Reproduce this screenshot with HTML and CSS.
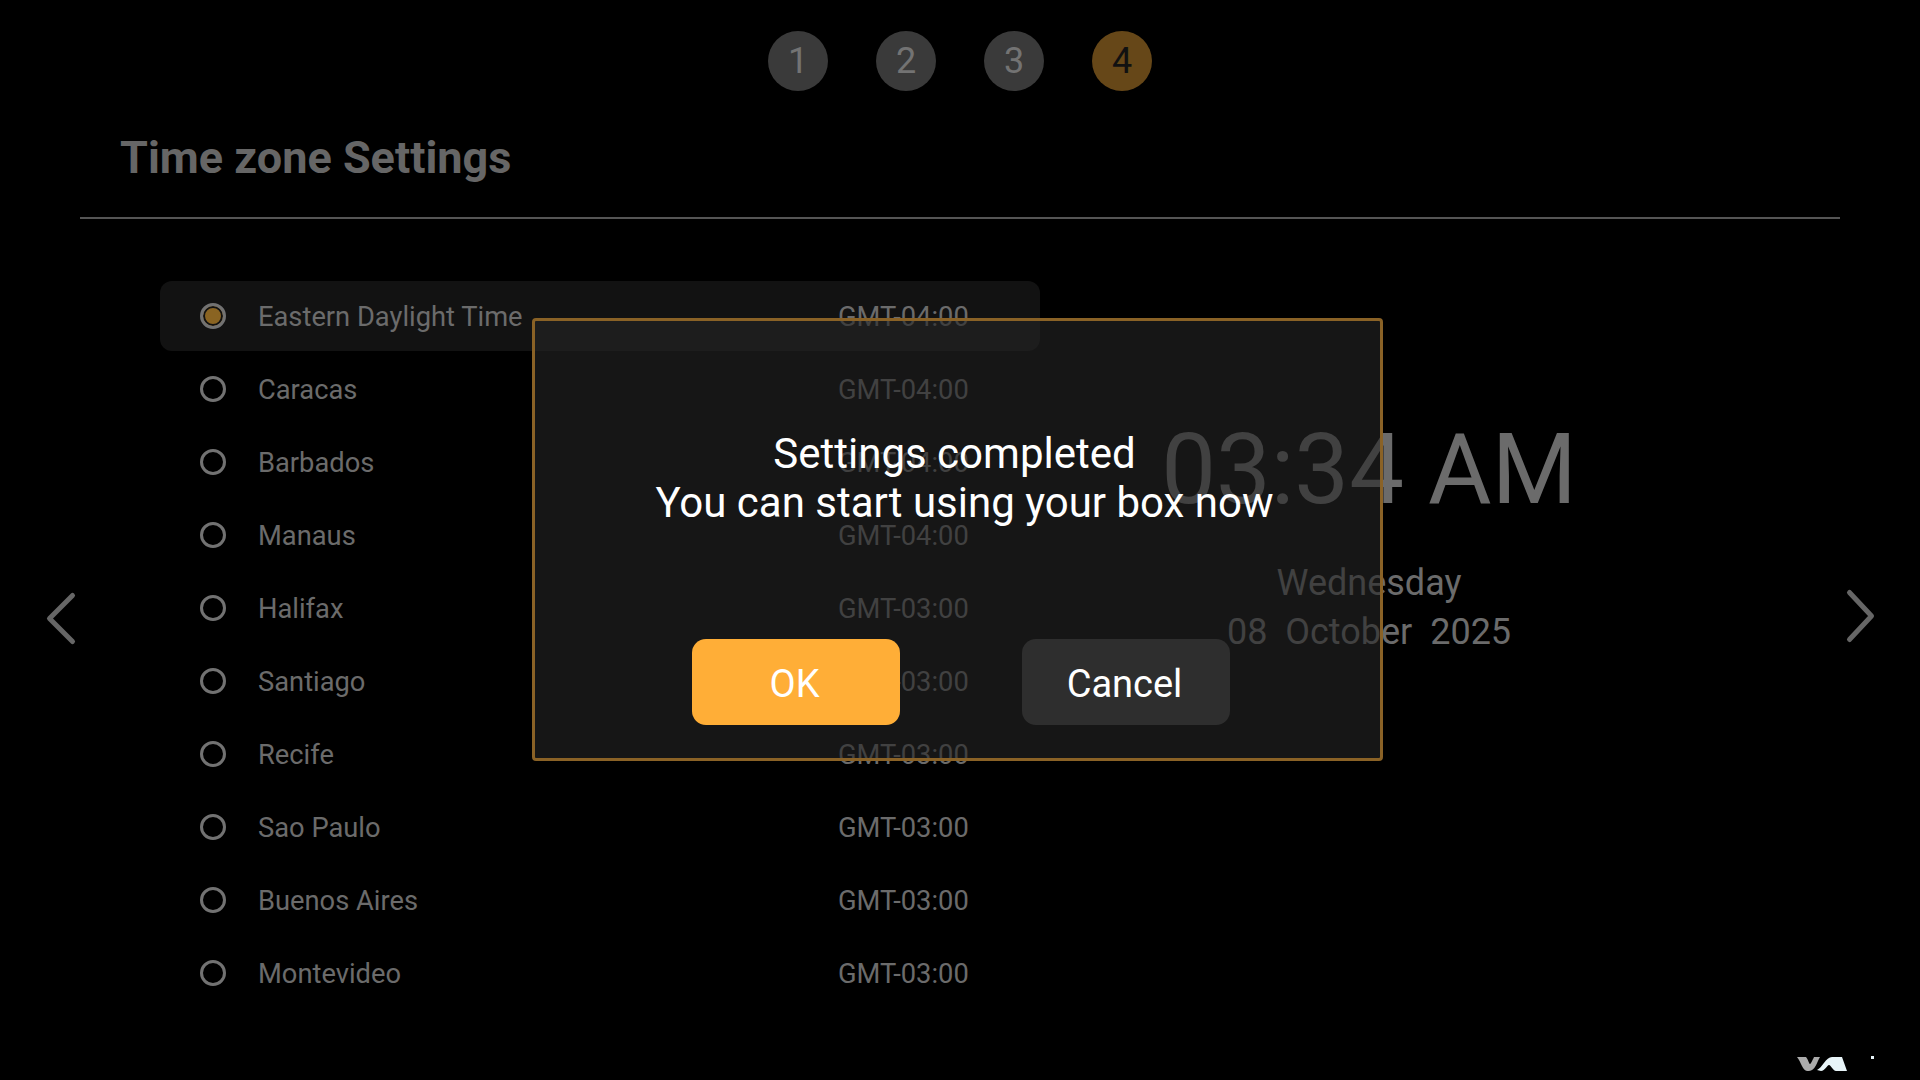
FILE: index.html
```html
<!DOCTYPE html>
<html lang="en">
<head>
  <meta charset="UTF-8">
  <title>Time zone Settings</title>
  <link rel="stylesheet" href="styles.css">
</head>
<body>
  <div class="steps">
    <div class="step">1</div>
    <div class="step">2</div>
    <div class="step">3</div>
    <div class="step current">4</div>
  </div>
  <div class="title">Time zone Settings</div>
  <div class="rule"></div>
  <div class="content">
    <div class="zone-list">
      <div class="zone selected"><span class="radio"></span><span class="zone-name">Eastern Daylight Time</span><span class="zone-gmt">GMT-04:00</span></div>
      <div class="zone"><span class="radio"></span><span class="zone-name">Caracas</span><span class="zone-gmt">GMT-04:00</span></div>
      <div class="zone"><span class="radio"></span><span class="zone-name">Barbados</span><span class="zone-gmt">GMT-04:00</span></div>
      <div class="zone"><span class="radio"></span><span class="zone-name">Manaus</span><span class="zone-gmt">GMT-04:00</span></div>
      <div class="zone"><span class="radio"></span><span class="zone-name">Halifax</span><span class="zone-gmt">GMT-03:00</span></div>
      <div class="zone"><span class="radio"></span><span class="zone-name">Santiago</span><span class="zone-gmt">GMT-03:00</span></div>
      <div class="zone"><span class="radio"></span><span class="zone-name">Recife</span><span class="zone-gmt">GMT-03:00</span></div>
      <div class="zone"><span class="radio"></span><span class="zone-name">Sao Paulo</span><span class="zone-gmt">GMT-03:00</span></div>
      <div class="zone"><span class="radio"></span><span class="zone-name">Buenos Aires</span><span class="zone-gmt">GMT-03:00</span></div>
      <div class="zone"><span class="radio"></span><span class="zone-name">Montevideo</span><span class="zone-gmt">GMT-03:00</span></div>
    </div>
    <div class="clock">
      <div class="clock-time">03:34 AM</div>
      <div class="clock-day">Wednesday</div>
      <div class="clock-date">08&nbsp; October&nbsp; 2025</div>
    </div>
  </div>

  <svg class="arrow arrow-left" width="40" height="64" viewBox="0 0 40 64">
    <path d="M32.5 9.5 L9.5 32.5 L32.5 55.5" fill="none" stroke="#666" stroke-width="5" stroke-linecap="round" stroke-linejoin="round"/>
  </svg>
  <svg class="arrow arrow-right" width="40" height="64" viewBox="0 0 40 64">
    <path d="M9.5 6.5 L31.5 30 L9.5 53.5" fill="none" stroke="#666" stroke-width="5" stroke-linecap="round" stroke-linejoin="round"/>
  </svg>

  <div class="dialog">
    <div class="dialog-text">
      <div class="dialog-head">Settings completed</div>
      <div>You can start using your box now</div>
    </div>
    <div class="dialog-buttons">
      <div class="btn btn-ok">OK</div>
      <div class="btn btn-cancel">Cancel</div>
    </div>
  </div>

  <svg class="logo" width="80" height="20" viewBox="0 0 80 20">
    <path d="M0 1 H9 C11 3 12 8 13 8 C14 8 16 3 17 1 H23 C20 6 18 15 12 15 H10 C6 15 4 6 0 1 Z" fill="#ababab"/>
    <path d="M20 14 C25 12 29 1 35 1 H45 L50 15 H39 C36 15 34 9 32 9 C30 9 28 15 24 15 Z" fill="#e8f4f8"/>
    <rect x="74" y="0" width="3" height="3" fill="#e8f4f8"/>
  </svg>
</body>
</html>
```

FILE: styles.css
```css
body {
  margin: 0;
  width: 1920px;
  height: 1080px;
  overflow: hidden;
  position: relative;
  background-color: #000;
  font-family: Roboto, sans-serif;
  color: #6b6b6b;
}
.steps {
  display: flex;
  justify-content: center;
  gap: 48px;
  padding-top: 31px;
}
.step {
  width: 60px;
  height: 60px;
  border-radius: 50%;
  background-color: #3a3a3a;
  color: #737373;
  font-size: 36px;
  line-height: 61px;
  text-align: center;
}
.step.current {
  background-color: #664718;
  color: #111;
}
.title {
  margin: 41px 0 0 120px;
  font-size: 45px;
  line-height: 52px;
  font-weight: 700;
  color: #666;
}
.rule {
  height: 2px;
  margin: 33px 80px 0;
  background-color: #555;
}
.content {
  display: flex;
  margin-top: 62px;
}
.zone-list {
  display: flex;
  flex-direction: column;
  gap: 3px;
  width: 880px;
  margin-left: 160px;
}
.zone {
  display: flex;
  align-items: center;
  height: 70px;
  padding-left: 40px;
  border-radius: 12px;
  font-size: 27.3px;
  line-height: 34px;
}
.zone.selected {
  background-color: #121212;
}
.radio {
  box-sizing: border-box;
  width: 26px;
  height: 26px;
  border: 3px solid #727272;
  border-radius: 50%;
  margin-right: 32px;
  margin-top: -1px;
}
.zone.selected .radio {
  background-color: #8a6422;
  box-shadow: inset 0 0 0 2px #121212;
}
.zone-name {
  width: 580px;
  padding-top: 2px;
}
.zone-gmt {
  padding-top: 2px;
}
.clock {
  width: 658px;
  padding-top: 133px;
  text-align: center;
}
.clock-time {
  font-size: 97.5px;
  line-height: 112px;
  white-space: nowrap;
}
.clock-day {
  margin-top: 33px;
  font-size: 36px;
  line-height: 49px;
}
.clock-date {
  font-size: 36px;
  line-height: 49px;
}
.arrow {
  position: absolute;
  top: 586px;
}
.arrow-left {
  left: 40px;
}
.arrow-right {
  left: 1840px;
}
.dialog {
  position: absolute;
  left: 532px;
  top: 318px;
  box-sizing: border-box;
  width: 851px;
  height: 443px;
  border: 3px solid #8a6226;
  border-radius: 4px;
  background-color: rgba(37, 37, 37, 0.6);
}
.dialog-text {
  padding: 108px 0 0 14px;
  font-size: 42px;
  line-height: 49px;
  color: #fff;
  text-align: center;
}
.dialog-head {
  padding-right: 20px;
}
.dialog-buttons {
  display: flex;
  gap: 122px;
  margin: 112px 0 0 157px;
}
.btn {
  box-sizing: border-box;
  width: 208px;
  height: 86px;
  padding-right: 3px;
  border-radius: 14px;
  font-size: 38px;
  line-height: 90px;
  text-align: center;
  color: #fff;
}
.btn-ok {
  background-color: #ffae37;
}
.btn-cancel {
  background-color: #2e2e2e;
}
.logo {
  position: absolute;
  left: 1797px;
  top: 1056px;
}
```
